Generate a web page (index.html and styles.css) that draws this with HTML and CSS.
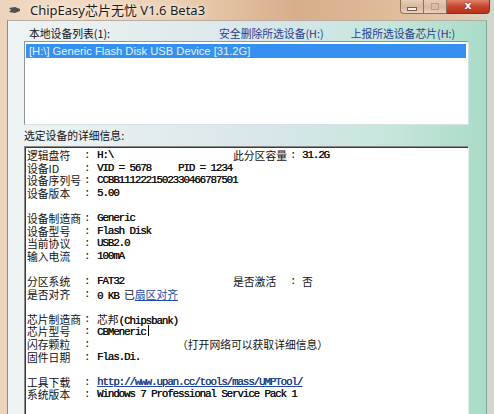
FILE: index.html
```html
<!DOCTYPE html>
<html lang="zh-CN">
<head>
    <meta charset="UTF-8">
    <title>ChipEasy芯片无忧 V1.6 Beta3</title>
    <link rel="stylesheet" href="styles.css">
</head>
<body>
    <div class="window">
        <div class="titlebar">
            <svg class="app-icon" width="12" height="8" viewBox="0 0 12 8">
                <polygon points="0,2 6,1 11,3 11,5 6,7 0,6 2,4" fill="#505050"/>
            </svg>
            <span class="title">ChipEasy芯片无忧 V1.6 Beta3</span>
            <div class="caption-buttons">
                <span class="cap-btn cap-min"><i></i></span>
                <span class="cap-btn cap-max"><i></i></span>
                <span class="cap-btn cap-close">x</span>
            </div>
        </div>

        <div class="client">
            <div class="list-header">
                <span class="list-title">本地设备列表(1):</span>
                <a class="action action-eject">安全删除所选设备(H:)</a>
                <a class="action">上报所选设备芯片(H:)</a>
            </div>

            <div class="device-list">
                <div class="device selected">[H:\] Generic Flash Disk USB Device [31.2G]</div>
            </div>

            <div class="section-label">选定设备的详细信息:</div>

            <div class="details">
                <div class="row">
                    <span class="key">逻辑盘符</span><span class="colon">:</span><span class="val">H:\</span>
                    <span class="key">此分区容量</span><span class="colon">:</span><span class="val">31.2G</span>
                </div>
                <div class="row">
                    <span class="key">设备ID</span><span class="colon">:</span><span class="val wide">VID = 5678&nbsp;&nbsp;&nbsp;&nbsp;&nbsp;PID = 1234</span>
                </div>
                <div class="row">
                    <span class="key">设备序列号</span><span class="colon">:</span><span class="val wide">CCBB1112221502330466787501</span>
                </div>
                <div class="row">
                    <span class="key">设备版本</span><span class="colon">:</span><span class="val wide">5.00</span>
                </div>
                <div class="row blank"></div>

                <div class="row">
                    <span class="key">设备制造商</span><span class="colon">:</span><span class="val wide">Generic</span>
                </div>
                <div class="row">
                    <span class="key">设备型号</span><span class="colon">:</span><span class="val wide">Flash Disk</span>
                </div>
                <div class="row">
                    <span class="key">当前协议</span><span class="colon">:</span><span class="val wide">USB2.0</span>
                </div>
                <div class="row">
                    <span class="key">输入电流</span><span class="colon">:</span><span class="val wide">100mA</span>
                </div>
                <div class="row blank"></div>

                <div class="row">
                    <span class="key">分区系统</span><span class="colon">:</span><span class="val">FAT32</span>
                    <span class="key">是否激活</span><span class="colon">:</span><span class="val"><span class="cjk">否</span></span>
                </div>
                <div class="row">
                    <span class="key">是否对齐</span><span class="colon">:</span><span class="val wide">0 KB <span class="cjk">已<a class="link">扇区对齐</a></span></span>
                </div>
                <div class="row blank"></div>

                <div class="row">
                    <span class="key">芯片制造商</span><span class="colon">:</span><span class="val wide"><span class="cjk">芯邦</span>(Chipsbank)</span>
                </div>
                <div class="row">
                    <span class="key">芯片型号</span><span class="colon">:</span><span class="val wide">CBMeneric<span class="caret"></span></span>
                </div>
                <div class="row">
                    <span class="key">闪存颗粒</span><span class="colon">:</span><span class="val wide"><span class="cjk note">（打开网络可以获取详细信息）</span></span>
                </div>
                <div class="row">
                    <span class="key">固件日期</span><span class="colon">:</span><span class="val wide">Flas.Di.</span>
                </div>
                <div class="row blank"></div>

                <div class="row">
                    <span class="key">工具下载</span><span class="colon">:</span><span class="val wide"><a class="link">http://www.upan.cc/tools/mass/UMPTool/</a></span>
                </div>
                <div class="row">
                    <span class="key">系统版本</span><span class="colon">:</span><span class="val wide">Windows 7 Professional Service Pack 1</span>
                </div>
            </div>
        </div>
    </div>
</body>
</html>
```

FILE: styles.css
```css
html, body {
    margin: 0;
    padding: 0;
}

body {
    width: 494px;
    height: 414px;
    overflow: hidden;
    font-family: "Noto Sans CJK SC", sans-serif;
}

/* aero frame, warm glass */
.window {
    height: 414px;
    display: flex;
    flex-direction: column;
    background: linear-gradient(to right, #edd3bb 0%, #f2dcc7 12%, #ebcfb3 35%, #d7ae8a 60%, #dfbb98 78%, #e3c7ad 92%, #cfd8cc 100%);
}

.titlebar {
    height: 20px;
    display: flex;
    align-items: center;
    flex-shrink: 0;
}

.app-icon {
    margin-left: 9px;
    margin-right: 9px;
}

.title {
    font-family: "Noto Sans", "Noto Sans CJK SC", sans-serif;
    font-size: 13px;
    color: #1b1b1b;
    text-shadow: 0 0 6px #fff4e8, 0 0 3px #fff4e8;
    position: relative;
    top: -1px;
}

.caption-buttons {
    margin-left: auto;
    margin-right: 4px;
    align-self: flex-start;
    display: flex;
}

.cap-btn {
    height: 14px;
    box-sizing: border-box;
    display: flex;
    align-items: center;
    justify-content: center;
    border: 1px solid #8d6f5c;
    border-top: none;
}

.cap-min, .cap-max {
    width: 24px;
    background: linear-gradient(#e6cdb6, #d9b89c 55%, #e8d2bf);
}

.cap-min {
    border-bottom-left-radius: 4px;
}

.cap-max {
    width: 23px;
    border-left: none;
}

.cap-min i {
    width: 8px;
    height: 2px;
    background: #f7efe8;
    border: 1px solid #7a5e4d;
    margin-top: 4px;
}

.cap-max i {
    width: 6px;
    height: 5px;
    border: 1px solid #b89c88;
    background: transparent;
}

.cap-close {
    width: 43px;
    border-left: none;
    border-color: #7a3426;
    border-bottom-right-radius: 4px;
    background: linear-gradient(#e0826d, #c8462d 50%, #b9321a);
    color: #fff;
    font-family: "DejaVu Sans", sans-serif;
    font-size: 11px;
    font-weight: bold;
    line-height: 1;
    padding-bottom: 2px;
    text-shadow: 0 0 2px #7a2010;
}

/* client area */
.client {
    flex: 1;
    display: flex;
    flex-direction: column;
    margin: 0 7px;
    border-left: 1px solid #8c8a88;
    border-right: 1px solid #7fa89a;
    border-top: 1px solid #b8aca0;
    background: linear-gradient(to right, #eef4f3 0%, #e3ecee 30%, #d7e6ea 55%, #c6e6dc 80%, #a8dcc7 100%);
    padding: 6px 17px 0 16px;
    min-height: 0;
}

.list-header {
    display: flex;
    height: 13px;
    line-height: 13px;
    font-size: 10.8px;
    color: #111;
    padding-left: 5px;
}

.action {
    color: #1f3f8f;
}

.action-eject {
    margin-left: 109px;
    margin-right: 27px;
}

.device-list {
    margin-top: 1px;
    height: 84px;
    flex-shrink: 0;
    box-sizing: border-box;
    background: #fff;
    border: 1px solid #8e959c;
    border-right-color: #d8e2e4;
    border-bottom-color: #d8e2e4;
    padding: 2px 2px 0 1px;
}

.device {
    height: 14px;
    line-height: 14px;
    padding-left: 3px;
    font-family: "Liberation Sans", sans-serif;
    font-size: 11.2px;
    white-space: nowrap;
}

.device.selected {
    background: #3590f0;
    color: #e4f0ff;
}

.section-label {
    margin-top: 4px;
    height: 13px;
    line-height: 13px;
    font-size: 10.8px;
    color: #111;
}

.details {
    margin-top: 4px;
    flex: 1;
    min-height: 0;
    background: #fff;
    border: 1px solid #8a8a8a;
    border-right-color: #e4ecec;
    border-bottom: none;
    box-shadow: inset 1px 1px 0 #3a3a3a;
    padding: 2px 0 0 2px;
}

.row {
    display: grid;
    grid-template-columns: 56px 14px 136px 56px 13px 1fr;
    height: 12.6px;
    line-height: 12.6px;
    font-size: 10.8px;
    color: #111;
    white-space: nowrap;
}

.key {
    font-family: "Noto Sans CJK SC", sans-serif;
}

.colon {
    font-family: "Liberation Mono", monospace;
    padding-left: 1px;
}

.val {
    font-family: "Liberation Mono", "Noto Sans CJK SC", monospace;
    letter-spacing: -1.08px;
    text-shadow: 0.2px 0 0 #111;
}

.val.wide {
    grid-column: 3 / 7;
}

.cjk {
    font-family: "Noto Sans CJK SC", sans-serif;
    letter-spacing: 0;
    text-shadow: none;
}

.note {
    margin-left: 80px;
}

.link {
    color: #1f4aa8;
    text-decoration: underline;
}

.caret {
    display: inline-block;
    width: 1px;
    height: 11px;
    background: #000;
    vertical-align: -1px;
    margin-left: 2px;
}
```
